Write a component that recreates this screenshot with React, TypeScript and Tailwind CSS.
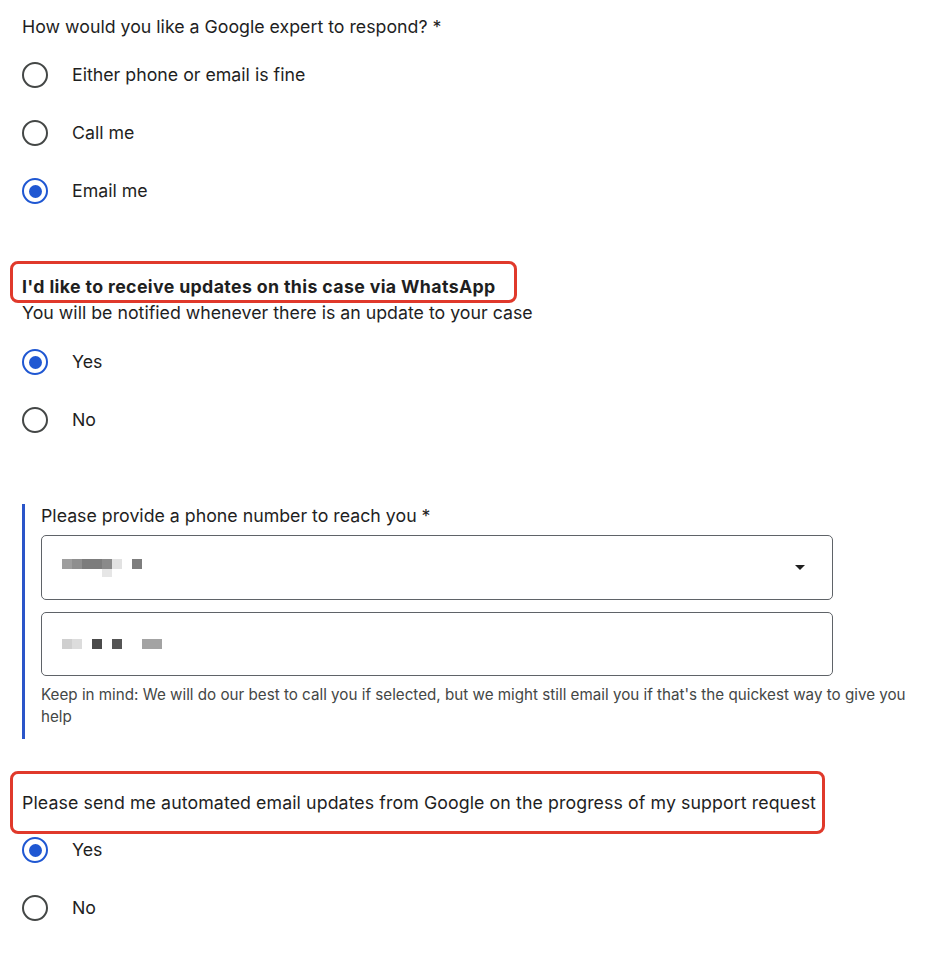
const Radio = ({ checked, label }: { checked?: boolean; label: string }) => {
  return (
    <div className="flex h-[58px] items-center">
      {checked ? (
        <span className="flex h-[26px] w-[26px] items-center justify-center rounded-full border-2 border-[#1f57d2]">
          <span className="h-[13px] w-[13px] rounded-full bg-[#1f57d2]" />
        </span>
      ) : (
        <span className="h-[26px] w-[26px] rounded-full border-2 border-[#444746]" />
      )}
      <span className="ml-[24px] text-[17.75px] leading-6 text-[#1f1f1f]">{label}</span>
    </div>
  );
};

const Blur = ({ w, c }: { w: number; c: string }) => {
  return <span className={w === 20 ? `h-[10px] w-[20px] ${c}` : `h-[10px] w-[10px] ${c}`} />;
};

const App = () => {
  return (
    <div className="min-h-screen bg-white pl-[22px] pt-[15px] text-[#1f1f1f] [font-family:Inter,Roboto,sans-serif]">
      {/* Contact method */}
      <p className="text-[17.75px] leading-6">How would you like a Google expert to respond? *</p>
      <div className="mt-[7px]">
        <Radio label="Either phone or email is fine" />
        <Radio label="Call me" />
        <Radio checked label="Email me" />
      </div>

      {/* WhatsApp */}
      <div className="mt-[41px] -ml-[12px] flex h-[42px] w-[507px] items-center rounded-[8px] border-[3px] border-[#e0392b] pl-[9px] pt-[9px]">
        <span className="text-[17.75px] font-bold leading-6 tracking-[0.02em]">I'd like to receive updates on this case via WhatsApp</span>
      </div>
      <p className="-mt-[2px] text-[17.75px] leading-6">You will be notified whenever there is an update to your case</p>
      <div className="mt-[8px]">
        <Radio checked label="Yes" />
        <Radio label="No" />
      </div>

      {/* Phone */}
      <div className="mt-[55px] flex w-[900px]">
        <div className="w-[3px] bg-[#2a55c9]" />
        <div className="flex-1 pb-[11px] pl-[16px]">
          <p className="text-[17.75px] leading-6">Please provide a phone number to reach you *</p>
          <div className="mt-[7px] flex h-[65px] w-[792px] items-center rounded-[5px] border border-[#5f6368] pl-[20px] pr-[27px]">
            <div className="flex flex-col">
              <div className="flex">
                <Blur w={10} c="bg-[#9e9e9e]" />
                <Blur w={10} c="bg-[#8f8f8f]" />
                <Blur w={20} c="bg-[#7c7c7c]" />
                <Blur w={10} c="bg-[#8a8a8a]" />
                <Blur w={10} c="bg-[#e2e2e2]" />
                <span className="w-[10px]" />
                <Blur w={10} c="bg-[#7d7d7d]" />
              </div>
              <div className="flex pl-[40px]">
                <span className="h-[8px] w-[10px] bg-[#e6e6e6]" />
              </div>
            </div>
            <svg className="ml-auto" width="10" height="5" viewBox="0 0 10 5">
              <path d="M0 0h10L5 5z" fill="#1f1f1f" />
            </svg>
          </div>
          <div className="mt-[12px] flex h-[64px] w-[792px] items-center rounded-[5px] border border-[#5f6368] pl-[20px]">
            <div className="flex">
              <Blur w={10} c="bg-[#cfcfcf]" />
              <Blur w={10} c="bg-[#dcdcdc]" />
              <span className="w-[10px]" />
              <Blur w={10} c="bg-[#4a4a4a]" />
              <span className="w-[10px]" />
              <Blur w={10} c="bg-[#555555]" />
              <span className="w-[20px]" />
              <Blur w={20} c="bg-[#a3a3a3]" />
            </div>
          </div>
          <p className="mt-[8px] text-[15.2px] leading-[22px] text-[#444746]">
            Keep in mind: We will do our best to call you if selected, but we might still email you if that's the quickest way to give you help
          </p>
        </div>
      </div>

      {/* Email updates */}
      <div className="mt-[32px] -ml-[12px] flex h-[63px] w-[815px] items-center rounded-[8px] border-[3px] border-[#e0392b] pl-[9px]">
        <span className="text-[17.75px] leading-6 tracking-[0.005em]">Please send me automated email updates from Google on the progress of my support request</span>
      </div>
      <div className="-mt-[13px]">
        <Radio checked label="Yes" />
        <Radio label="No" />
      </div>
    </div>
  );
};

export default App;
